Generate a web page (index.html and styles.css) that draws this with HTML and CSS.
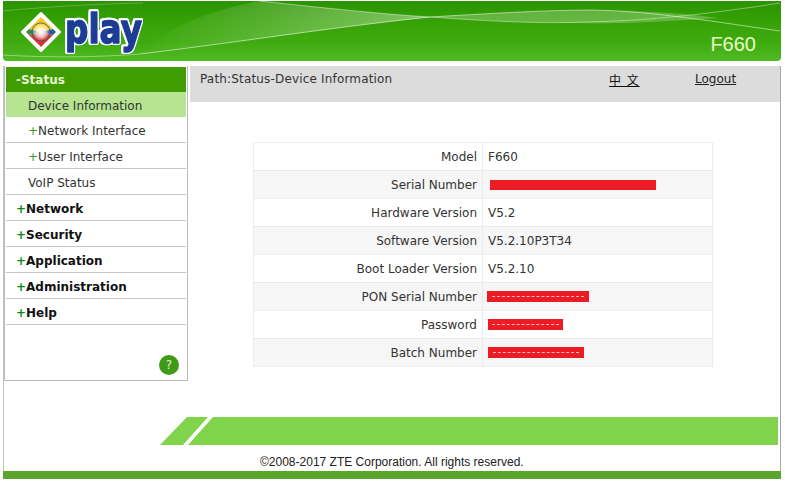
FILE: index.html
```html
<!DOCTYPE html>
<html lang="en">
<head>
<meta charset="utf-8">
<title>F660</title>
<link rel="stylesheet" href="styles.css">
</head>
<body>
<div class="page">
  <header class="header">
    <svg class="swoosh" viewBox="0 0 778 59" aria-hidden="true">
      <defs>
        <linearGradient id="fadeA" x1="0" x2="1" y1="0" y2="0">
          <stop offset="0" stop-color="#fff" stop-opacity="0"/>
          <stop offset="1" stop-color="#fff" stop-opacity=".38"/>
        </linearGradient>
      </defs>
      <path d="M137 53C230 42 330 26 427 16C390 14 330 8 257 0C200 10 160 30 137 53Z" fill="url(#fadeA)"/>
      <path d="M427 16C480 13 540 9 590 9C640 10 680 12 715 17C660 21 610 23 570 22C530 22 480 20 427 16Z" fill="#fff" opacity=".24"/>
      <path d="M137 53C230 42 330 26 427 16" fill="none" stroke="#fff" stroke-opacity=".55"/>
      <path d="M257 0C330 8 390 14 427 16" fill="none" stroke="#fff" stroke-opacity=".45"/>
      <path d="M427 16C480 13 540 9 590 9C650 10 720 22 777 30" fill="none" stroke="#fff" stroke-opacity=".5"/>
      <path d="M427 16C480 20 540 23 580 21C640 20 700 14 777 2" fill="none" stroke="#fff" stroke-opacity=".4"/>
      <path d="M0 10C40 6 90 3 140 2" fill="none" stroke="#fff" stroke-opacity=".25"/>
      <path d="M0 54C50 57 100 56 137 53" fill="none" stroke="#fff" stroke-opacity=".4"/>
    </svg>
    <svg class="logo" width="165" height="50" viewBox="0 0 165 50" role="img" aria-label="play">
      <defs>
        <radialGradient id="glow">
          <stop offset="0" stop-color="#fff"/>
          <stop offset=".5" stop-color="#fff" stop-opacity=".75"/>
          <stop offset="1" stop-color="#fff" stop-opacity="0"/>
        </radialGradient>
      </defs>
      <path d="M33 6.500 51.500 25 33 43.500 14.500 25Z" fill="#fff" stroke="#fff" stroke-width="3" stroke-linejoin="round"/>
      <path d="M33 10 45 22 33 25 21 22Z" fill="#f8c91c"/>
      <path d="M33 40 45 28 33 25 21 28Z" fill="#d8362a"/>
      <path d="M18 25 21 22 33 25 21 28Z" fill="#3c8a4a"/>
      <path d="M48 25 45 22 33 25 45 28Z" fill="#2a5a9a"/>
      <circle cx="33" cy="25" r="9" fill="none" stroke="#2b5596" stroke-width=".8"/>
      <circle cx="33" cy="25" r="9" fill="url(#glow)"/>
      <text class="logo-text" x="57" y="36" textLength="77" lengthAdjust="spacingAndGlyphs">play</text>
    </svg>
    <span class="model">F660</span>
  </header>
  <div class="main">
    <nav class="side">
      <div class="menu menu-open">-Status</div>
      <div class="sub sub-active">Device Information</div>
      <div class="sub"><b class="plus-sub">+</b>Network Interface</div>
      <div class="sub"><b class="plus-sub">+</b>User Interface</div>
      <div class="sub">VoIP Status</div>
      <div class="menu"><b class="plus">+</b>Network</div>
      <div class="menu"><b class="plus">+</b>Security</div>
      <div class="menu"><b class="plus">+</b>Application</div>
      <div class="menu"><b class="plus">+</b>Administration</div>
      <div class="menu"><b class="plus">+</b>Help</div>
      <div class="side-foot"><span class="help">?</span></div>
    </nav>
    <section class="content">
      <div class="pathbar">
        <span class="path">Path:Status-Device Information</span>
        <a class="lang" href="#">中 文</a>
        <a class="logout" href="#">Logout</a>
      </div>
      <table class="info">
        <tr><th>Model</th><td>F660</td></tr>
        <tr><th>Serial Number</th><td><span class="red red-serial"></span></td></tr>
        <tr><th>Hardware Version</th><td>V5.2</td></tr>
        <tr><th>Software Version</th><td>V5.2.10P3T34</td></tr>
        <tr><th>Boot Loader Version</th><td>V5.2.10</td></tr>
        <tr><th>PON Serial Number</th><td><span class="red red-pon"><i></i></span></td></tr>
        <tr><th>Password</th><td><span class="red red-pass"><i></i></span></td></tr>
        <tr><th>Batch Number</th><td><span class="red red-batch"><i></i></span></td></tr>
      </table>
      <div class="band">
        <div class="band-a"></div>
        <div class="band-b"></div>
      </div>
      <footer class="copy">©2008-2017 ZTE Corporation. All rights reserved.</footer>
    </section>
  </div>
  <div class="bottom"></div>
</div>
</body>
</html>
```
FILE: styles.css
```css
html, body { margin: 0; padding: 0; background: #fff; }
body { font-family: "DejaVu Sans", Verdana, sans-serif; font-size: 12px; color: #333; }
.page { width: 785px; height: 481px; overflow: hidden; padding-top: 1px; box-sizing: border-box; }

.header {
  position: relative;
  display: flex;
  align-items: flex-start;
  justify-content: space-between;
  width: 778px;
  height: 60px;
  margin-left: 3px;
  border-radius: 0 0 4px 4px;
  overflow: hidden;
  background: linear-gradient(180deg, #2a9300 0, #36a206 35%, #3fab10 70%, #50ba22 100%);
}
.swoosh { position: absolute; left: 0; top: 0; width: 778px; height: 59px; }
.logo { position: relative; margin: 6px 0 0 5px; }
.logo-text {
  font-family: "DejaVu Sans", sans-serif;
  font-weight: 700;
  font-size: 40px;
  fill: #1c3c96;
  stroke: #1c3c96;
  stroke-width: 1.400px;
  stroke-linejoin: round;
  filter: drop-shadow(1.500px 0 0 #fff) drop-shadow(-1.500px 0 0 #fff) drop-shadow(0 1.500px 0 #fff) drop-shadow(0 -1.500px 0 #fff);
}
.model {
  position: relative;
  margin: 32px 25px 0 0;
  font-family: "Liberation Sans", Arial, sans-serif;
  font-size: 20px;
  line-height: 23px;
  color: #e9fcc8;
}

.main {
  display: flex;
  width: 776px;
  height: 405px;
  margin: 5px 0 0 3px;
  border-right: 1px solid #a8a8a8;
  border-left: 1px solid #c4c4c4;
}
.side {
  display: flex;
  flex-direction: column;
  align-self: flex-start;
  flex: none;
  width: 180px;
  height: 313px;
  padding: 1px 1px 0;
  border: 1px solid #bbb;
  border-top: 0;
  margin-right: 2px;
}
.menu, .sub {
  height: 25px;
  line-height: 29px;
  border-bottom: 1px solid #c4c4c4;
  white-space: nowrap;
}
.menu { padding-left: 10px; font-weight: 700; color: #111; }
.menu-open { background: #409d00; color: #e6f5d0; border-bottom: 0; line-height: 27px; }
.sub { padding-left: 22px; color: #333; }
.sub-active { background: #b6e490; border-bottom: 0; }
.plus { color: #0c8a18; font-weight: 700; }
.plus-sub { color: #2e9b2e; font-weight: 400; }
.side-foot { flex: 1; display: flex; align-items: flex-end; justify-content: flex-end; padding: 0 7px 5px 0; }
.help {
  display: flex;
  align-items: center;
  justify-content: center;
  width: 20px;
  height: 20px;
  border-radius: 50%;
  background: #3f9a16;
  color: #e6f2d0;
  font-size: 12px;
}

.content { flex: 1; display: flex; flex-direction: column; min-width: 0; }
.pathbar {
  display: flex;
  flex: none;
  align-items: flex-start;
  height: 36px;
  padding: 6px 0 0 10px;
  box-sizing: border-box;
  background: #dcdcdc;
  line-height: 15px;
}
.path { width: 409px; letter-spacing: .17px; }
.lang { width: 86px; color: #111; font-family: "Noto Sans CJK SC", sans-serif; font-size: 12px; letter-spacing: 1px; word-spacing: 1px; }
.logout { color: #222; }

.info {
  flex: none;
  width: 460px;
  margin: 40px 0 0 63px;
  border-collapse: collapse;
  table-layout: fixed;
}
.info tr { height: 28px; }
.info tr:nth-child(even) { background: #f6f6f6; }
.info th, .info td { border: 1px solid #ececec; padding: 0; font-weight: 400; color: #333; }
.info th { width: 223px; padding-right: 5px; text-align: right; }
.info td { padding-left: 5px; }
.red { display: flex; align-items: center; justify-content: center; height: 11px; background: #ed1c24; }
.red i { display: block; width: 90%; border-top: 1px dashed #f6c0c0; }
.red-serial { width: 166px; height: 10px; margin-left: 2px; }
.red-pon { width: 102px; margin-left: -1px; }
.red-pass { width: 75px; }
.red-batch { width: 96px; }

.band { position: relative; flex: none; height: 28px; margin: 50px 2px 0 -30px; }
.band-a, .band-b { position: absolute; top: 0; bottom: 0; background: #80d44c; }
.band-a { left: 0; width: 48px; clip-path: polygon(0 100%, 23px 100%, 48px 0, 27px 0); }
.band-b { left: 28px; right: 0; clip-path: polygon(0 100%, 25px 0, 100% 0, 100% 100%); }

.copy {
  margin: 9px 0 0 70px;
  font-family: "Liberation Sans", Arial, sans-serif;
  font-size: 12px;
  line-height: 16px;
  color: #222;
}
.bottom { width: 778px; height: 8px; margin-left: 3px; background: #5aa52c; }
```
